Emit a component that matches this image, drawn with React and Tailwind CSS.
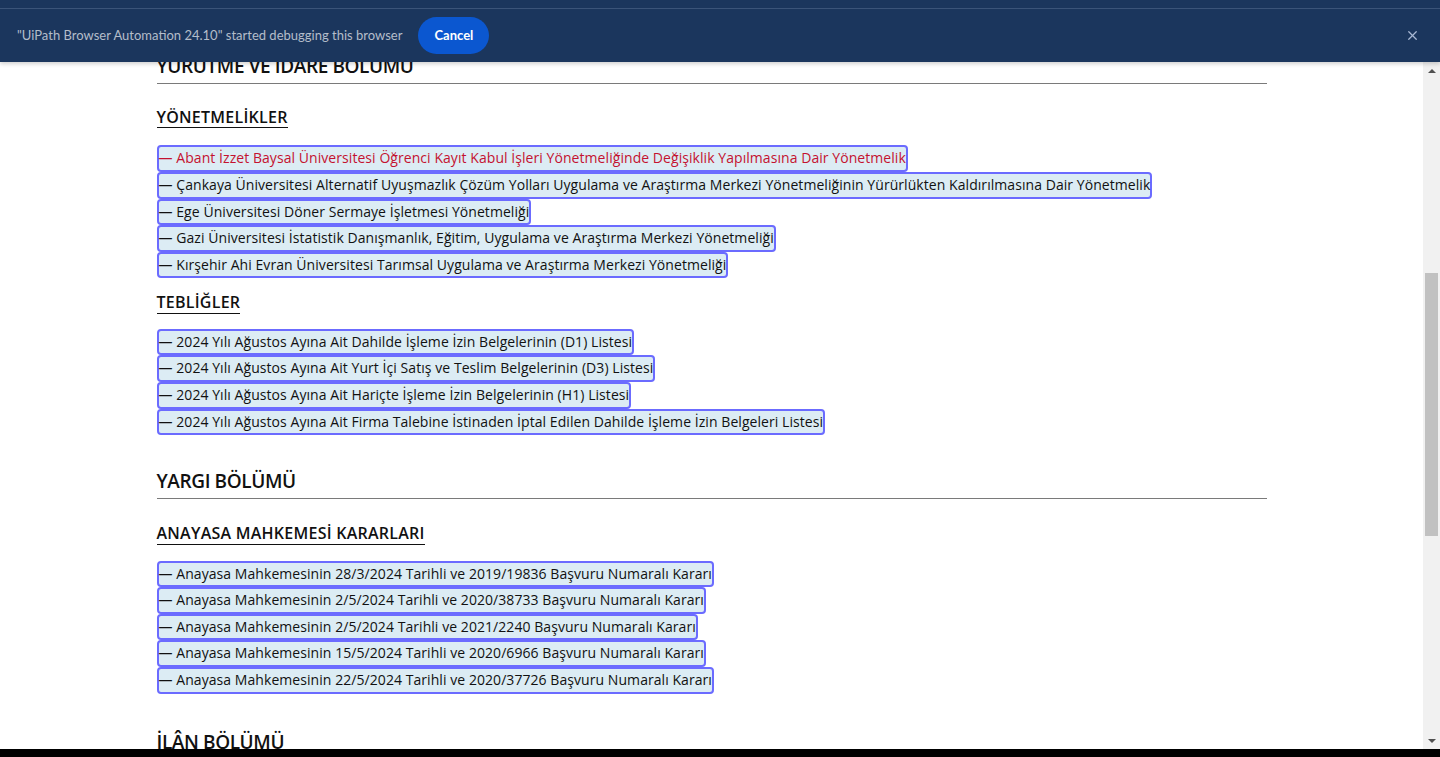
import { X } from 'lucide-react';

const yonetmelikler = [
  'Abant İzzet Baysal Üniversitesi Öğrenci Kayıt Kabul İşleri Yönetmeliğinde Değişiklik Yapılmasına Dair Yönetmelik',
  'Çankaya Üniversitesi Alternatif Uyuşmazlık Çözüm Yolları Uygulama ve Araştırma Merkezi Yönetmeliğinin Yürürlükten Kaldırılmasına Dair Yönetmelik',
  'Ege Üniversitesi Döner Sermaye İşletmesi Yönetmeliği',
  'Gazi Üniversitesi İstatistik Danışmanlık, Eğitim, Uygulama ve Araştırma Merkezi Yönetmeliği',
  'Kırşehir Ahi Evran Üniversitesi Tarımsal Uygulama ve Araştırma Merkezi Yönetmeliği',
];

const tebligler = [
  '2024 Yılı Ağustos Ayına Ait Dahilde İşleme İzin Belgelerinin (D1) Listesi',
  '2024 Yılı Ağustos Ayına Ait Yurt İçi Satış ve Teslim Belgelerinin (D3) Listesi',
  '2024 Yılı Ağustos Ayına Ait Hariçte İşleme İzin Belgelerinin (H1) Listesi',
  '2024 Yılı Ağustos Ayına Ait Firma Talebine İstinaden İptal Edilen Dahilde İşleme İzin Belgeleri Listesi',
];

const kararlar = [
  'Anayasa Mahkemesinin 28/3/2024 Tarihli ve 2019/19836 Başvuru Numaralı Kararı',
  'Anayasa Mahkemesinin 2/5/2024 Tarihli ve 2020/38733 Başvuru Numaralı Kararı',
  'Anayasa Mahkemesinin 2/5/2024 Tarihli ve 2021/2240 Başvuru Numaralı Kararı',
  'Anayasa Mahkemesinin 15/5/2024 Tarihli ve 2020/6966 Başvuru Numaralı Kararı',
  'Anayasa Mahkemesinin 22/5/2024 Tarihli ve 2020/37726 Başvuru Numaralı Kararı',
];

// highlighted link rows (the automation tool draws a box round each one)
const LinkList = ({ items, first }) => (
  <div className="flex flex-col items-start">
    {items.map((t, i) => (
      <a
        key={t}
        className={`block h-[26.67px] border-2 border-[#6b6bff] rounded-[4px] bg-[#dcecf4] text-[14px] leading-[22.6px] tracking-[0.06px] whitespace-nowrap ${
          first && i === 0 ? 'text-[#c41230]' : 'text-[#111]'
        }`}
      >
        — {t}
      </a>
    ))}
  </div>
);

const SectionTitle = ({ children, className = '' }) => (
  <h2 className={`text-[19px] leading-[24px] font-semibold tracking-[-0.4px] text-[#111] pb-[5px] border-b border-[#7a7a7a] ${className}`}>
    {children}
  </h2>
);

const SubTitle = ({ children, className = '' }) => (
  <div className={`flex items-start ${className}`}>
    <h3 className="text-[16px] leading-[19.2px] font-semibold tracking-[0.25px] text-[#111] border-b border-[#111]">
      {children}
    </h3>
  </div>
);

export default function App() {
  return (
    <div className="h-[757px] w-[1440px] overflow-hidden flex flex-col bg-white font-['Open_Sans','Noto_Sans',sans-serif]">
      {/* debugging infobar */}
      <div className="relative z-10 h-[62px] shrink-0 bg-[#1b365d] shadow-[0_2px_4px_rgba(0,0,0,0.18)] flex flex-col font-['Lato',sans-serif]">
        <div className="h-[9px] border-b border-[#3b5479]" />
        <div className="flex-1 flex items-center pl-[17px] pr-[20px]">
          <span className="text-[13px] text-[#b4bdca]">"UiPath Browser Automation 24.10" started debugging this browser</span>
          <button className="ml-[16px] h-[37px] w-[71px] rounded-full bg-[#0b57d0] text-white text-[13px] font-bold">
            Cancel
          </button>
          <X className="ml-auto h-[15px] w-[15px] text-[#a9b8d4]" strokeWidth={2} />
        </div>
      </div>

      <div className="flex-1 flex min-h-0">
        {/* page */}
        <div className="flex-1 overflow-hidden">
          <div className="mx-auto w-[1140px] px-[15px] -mt-[8px]">
            <SectionTitle>YÜRÜTME VE İDARE BÖLÜMÜ</SectionTitle>

            <SubTitle className="mt-[24px]">YÖNETMELİKLER</SubTitle>
            <div className="mt-[17px]">
              <LinkList items={yonetmelikler} first />
            </div>

            <SubTitle className="mt-[15px]">TEBLİĞLER</SubTitle>
            <div className="mt-[15px]">
              <LinkList items={tebligler} />
            </div>

            <SectionTitle className="mt-[34px]">YARGI BÖLÜMÜ</SectionTitle>

            <SubTitle className="mt-[25px]">ANAYASA MAHKEMESİ KARARLARI</SubTitle>
            <div className="mt-[16px]">
              <LinkList items={kararlar} />
            </div>

            <SectionTitle className="mt-[36px]">İLÂN BÖLÜMÜ</SectionTitle>
          </div>
        </div>

        {/* scrollbar */}
        <div className="w-[17px] shrink-0 bg-[#f1f1f1] flex flex-col items-center">
          <div className="h-[17px] flex items-center justify-center">
            <div className="w-0 h-0 border-l-[4px] border-r-[4px] border-b-[4px] border-l-transparent border-r-transparent border-b-[#505050]" />
          </div>
          <div className="mt-[194px] h-[263px] w-[13px] bg-[#c1c1c1]" />
          <div className="mt-auto h-[17px] flex items-center justify-center">
            <div className="w-0 h-0 border-l-[4px] border-r-[4px] border-t-[4px] border-l-transparent border-r-transparent border-t-[#505050]" />
          </div>
        </div>
      </div>

      <div className="h-[8px] shrink-0 bg-black" />
    </div>
  );
}
